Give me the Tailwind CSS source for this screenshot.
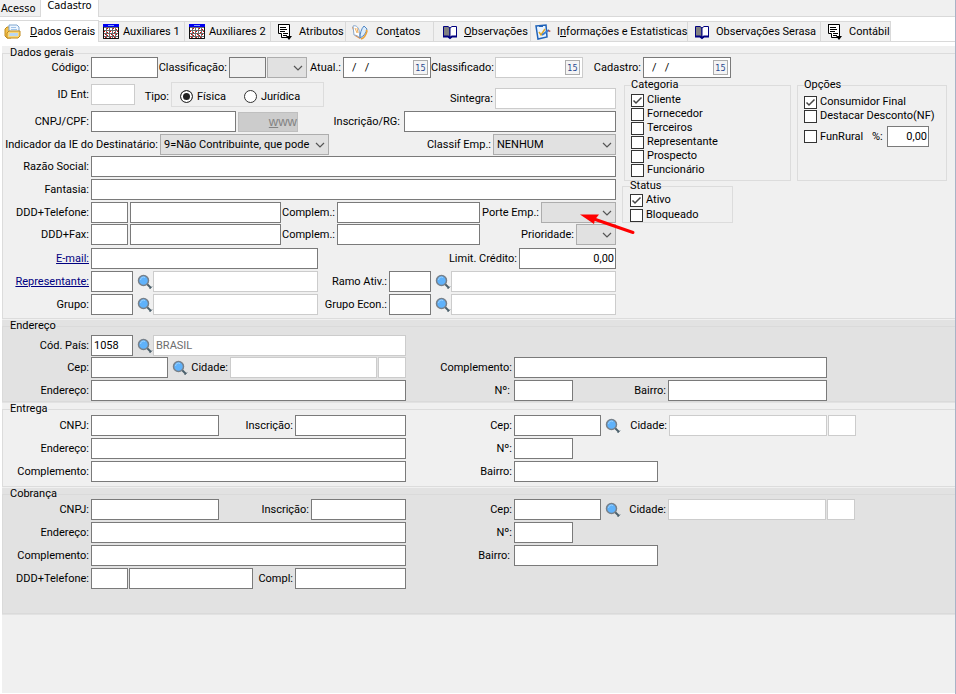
<!DOCTYPE html>
<html lang="pt-BR">

<head>
    <meta charset="UTF-8" />
    <meta name="viewport" content="width=device-width, initial-scale=1.0" />
    <title>Cadastro - Dados Gerais</title>
    <script src="https://cdn.jsdelivr.net/npm/@tailwindcss/browser@4"></script>
</head>

<body class="bg-white text-black text-[11px] leading-4 font-['Roboto','Liberation_Sans',sans-serif]">
    <!-- Shared icons -->
    <svg class="hidden" xmlns="http://www.w3.org/2000/svg">
        <symbol id="i-search" viewBox="0 0 16 16">
            <path d="M10 10L14 14" stroke="#4a5f6b" stroke-width="2" />
            <path d="M12.500 15L15 12.500" stroke="#4a5f6b" stroke-width="1" />
            <circle cx="6.500" cy="6.500" r="5" fill="#5fb2fb" stroke="#77808a" stroke-width="1.500" />
            <path d="M3.500 6A3 3 0 0 1 8 3.500" stroke="#9bd2ff" stroke-width="1" fill="none" />
        </symbol>
        <symbol id="i-grid" viewBox="0 0 16 16">
            <rect x="0" y="0" width="16" height="15" fill="#6a6a6a" />
            <rect x="0" y="0" width="16" height="3" fill="#0000f0" />
            <path d="M5 1.500h6" stroke="#7d9bff" />
            <g fill="#fff">
                <path d="M1 4h2v2H1zM4 4h2v2H4zM7 4h2v2H7zM10 4h2v2h-2zM13 4h2v2h-2z" />
                <path d="M1 7h2v2H1zM4 7h2v2H4zM7 7h2v2H7zM10 7h2v2h-2zM13 7h2v2h-2z" />
                <path d="M1 10h2v2H1zM4 10h2v2H4zM7 10h2v2H7zM10 10h2v2h-2zM13 10h2v2h-2z" />
                <path d="M1 13h2v1H1zM4 13h2v1H4zM7 13h2v1H7zM10 13h2v1h-2zM13 13h2v1h-2z" />
            </g>
            <path d="M4 4h1v1H4zM10 4h1v1h-1zM13 5h1v1h-1zM1 7h1v1H1zM4 8h1v1H4zM7 7h1v1H7zM11 8h1v1h-1zM14 7h1v1h-1zM2 10h1v1H2zM4 11h1v1H4zM8 10h1v1H8zM10 11h1v1h-1zM13 10h1v1h-1zM2 13h1v1H2zM7 13h1v1H7zM11 13h1v1h-1z" fill="#e00000" />
            <path d="M0.500 3V14.500H15.500V3" fill="none" stroke="#111" />
        </symbol>
        <symbol id="i-note" viewBox="0 0 16 16">
            <path d="M1 1h11v11l2 0-2 3-2-2H4V10H1z" fill="#fff" />
            <path d="M1 0.500h11.500V12M1.500 0.500V9.500H4.500V13.500H12M3 3.500h6M3 5.500h7M3 7.500h5M6 9.500h5M6 11.500h4" fill="none" stroke="#000" />
            <path d="M9 12h6l-3 4z" fill="#000" />
        </symbol>
        <symbol id="i-book" viewBox="0 0 16 16">
            <path d="M1.500 2.500H6L8 4V13.500L6 12.500H1.500z" fill="#808080" stroke="#000080" />
            <path d="M14.500 2.500H10L8 4V13.500L10 12.500H14.500z" fill="#fff" stroke="#000080" />
            <path d="M1 12.500h5L8 14L10 12.500h5" fill="none" stroke="#000080" stroke-width="2" />
        </symbol>
        <symbol id="i-chevron" viewBox="0 0 10 6">
            <path d="M1 1L5 5L9 1" fill="none" stroke="#555" stroke-width="1.200" />
        </symbol>
    </svg>

    <div class="min-h-screen flex flex-col border-r border-[#a9b3c6]">
        <!-- Main tabs -->
        <nav class="flex h-[17px] bg-[#f0f0f0] border-b border-[#d9d9d9] text-[11px] font-['DejaVu_Sans_Condensed','Noto_Sans',sans-serif]">
            <a href="#" class="w-10 pl-px pt-px leading-4">Acesso</a>
            <a href="#" class="w-[59px] h-[17px] bg-white border-x border-[#d9d9d9] text-center leading-3">Cadastro</a>
        </nav>

        <!-- Sub tabs -->
        <nav class="flex items-end h-[25px] border-b border-[#d9d9d9] whitespace-nowrap">
            <a href="#" class="flex items-center w-[99px] h-[22px] -mb-px bg-white border-t border-r border-[#d9d9d9] pl-1 gap-2">
                <svg class="w-[18px] h-4 shrink-0" viewBox="0 0 18 16">
                    <path d="M1 5l2-2h3l1 2v9H3l-2-2z" fill="#f3c04b" stroke="#c08a1c" />
                    <path d="M5 1h8l2 2v7H5z" fill="#eef6ff" stroke="#7fa6d0" />
                    <path d="M7 3.500h5M7 5.500h6" stroke="#9fc3e8" />
                    <path d="M3 9l2-2h11v5l-2 2H3z" fill="#f9d779" stroke="#c08a1c" />
                    <path d="M6 9h8v3H5z" fill="#b9d6f2" />
                </svg>
                <span><u>D</u>ados Gerais</span>
            </a>
            <a href="#" class="flex items-center w-[86px] h-5 bg-[#f0f0f0] border-t border-r border-[#d9d9d9] pl-1 gap-1">
                <svg class="size-4 shrink-0"><use href="#i-grid" /></svg>Auxiliares 1</a>
            <a href="#" class="flex items-center w-[86px] h-5 bg-[#f0f0f0] border-t border-r border-[#d9d9d9] pl-1 gap-1">
                <svg class="size-4 shrink-0"><use href="#i-grid" /></svg>Auxiliares 2</a>
            <a href="#" class="flex items-center w-[75px] h-5 bg-[#f0f0f0] border-t border-r border-[#d9d9d9] pl-1.5 gap-1.5">
                <svg class="size-4 shrink-0"><use href="#i-note" /></svg>Atributos</a>
            <a href="#" class="flex items-center w-[88px] h-5 bg-[#f0f0f0] border-t border-r border-[#d9d9d9] pl-1.5 gap-2">
                <svg class="size-4 shrink-0" viewBox="0 0 16 16">
                    <path d="M0 3l3 9 5 3 1-2-4-9z" fill="#e88b3a" />
                    <path d="M1 2c3-1 5 1 6 4l1 8c-2-2-4-3-6-3z" fill="#fff" stroke="#8ba9cc" />
                    <path d="M8 14c0-4 1-9 4-12l3 3c-1 4-3 7-7 9z" fill="#d9ebfb" stroke="#4d86c6" />
                    <path d="M3 4l2 5M5 4l1 5" stroke="#f0b060" />
                    <path d="M14 6l1 1c-1 4-3 7-6 8" fill="none" stroke="#e8a23a" stroke-width="1.500" />
                </svg>
                <span>Con<u>t</u>atos</span></a>
            <a href="#" class="flex items-center w-[97px] h-5 bg-[#f0f0f0] border-t border-r border-[#d9d9d9] pl-2 gap-1.5">
                <svg class="size-4 shrink-0"><use href="#i-book" /></svg><span><u>O</u>bservações</span></a>
            <a href="#" class="flex items-center w-[157px] h-5 bg-[#f0f0f0] border-t border-r border-[#d9d9d9] pl-1 gap-1.5">
                <svg class="size-4 shrink-0" viewBox="0 0 16 16">
                    <path d="M1 2l10-1 1 12-9 2z" fill="#e9f4ff" stroke="#1f62b8" stroke-width="1.500" />
                    <path d="M4 1h4v2H4z" fill="#1f62b8" />
                    <path d="M4 8l2 3 4-6" fill="none" stroke="#e5a823" stroke-width="1.500" />
                    <path d="M7 11l7-5" stroke="#3c7fd0" stroke-width="2" />
                    <path d="M13 6l3 1-2 1z" fill="#c0392b" />
                </svg>
                <span>I<u>n</u>formações e Estatisticas</span></a>
            <a href="#" class="flex items-center w-[133px] h-5 bg-[#f0f0f0] border-t border-r border-[#d9d9d9] pl-1.5 gap-1.5">
                <svg class="size-4 shrink-0"><use href="#i-book" /></svg>Observações Serasa</a>
            <a href="#" class="flex items-center w-[70px] h-5 bg-[#f0f0f0] border-t border-r border-[#d9d9d9] pl-1.5 gap-1.5">
                <svg class="size-4 shrink-0"><use href="#i-note" /></svg>Contábil</a>
        </nav>

        <form class="flex-1 mt-1 ml-0.5 mb-px bg-[#f0f0f0] whitespace-nowrap" onsubmit="event.preventDefault()">
            <!-- Dados gerais -->
            <fieldset class="min-w-0 mt-[3px] border border-r-0 border-[#dcdcdc] pb-[3px]">
                <legend class="ml-[7px] leading-2">Dados gerais</legend>
                <div class="flex items-center h-[21px]">
                    <label for="codigo" class="w-[88px] text-right pr-0.5">Código:</label>
                    <input id="codigo" type="text" class="w-[67px] h-[21px] border border-[#7a7a7a] bg-white px-1" />
                    <label for="classificacao" class="w-[71px] text-right pr-0.5">Classificação:</label>
                    <input id="classificacao" type="text" class="w-[37px] h-[21px] border border-[#7a7a7a] bg-[#f0f0f0] px-1" />
                    <div class="relative ml-px">
                        <select aria-label="Tipo de classificação" class="block appearance-none w-10 h-[21px] border border-[#adadad] bg-[#e1e1e1] px-1">
                            <option></option>
                        </select>
                        <svg class="absolute right-1 top-2 w-2.5 h-1.5 pointer-events-none"><use href="#i-chevron" /></svg>
                    </div>
                    <label for="atual" class="w-9 text-right pr-0.5">Atual.:</label>
                    <div class="flex items-center w-[88px] h-[21px] border border-[#7a7a7a] bg-white pr-0.5">
                        <input id="atual" type="text" value="/   /" class="min-w-0 flex-1 pl-2 whitespace-pre" />
                        <button type="button" class="w-[15px] h-[15px] border border-[#adadad] bg-[#f4f4f4] text-[#2a4a90] text-[9px] leading-3 font-['DejaVu_Sans_Condensed',sans-serif]">15</button>
                    </div>
                    <label for="classificado" class="w-16 text-right pr-0.5">Classificado:</label>
                    <div class="flex items-center w-[88px] h-[21px] border border-[#cccccc] bg-white pr-0.5">
                        <input id="classificado" type="text" class="min-w-0 flex-1 pl-2" />
                        <button type="button" class="w-[15px] h-[15px] border border-[#adadad] bg-[#f4f4f4] text-[#2a4a90] text-[9px] leading-3 font-['DejaVu_Sans_Condensed',sans-serif]">15</button>
                    </div>
                    <label for="cadastro" class="w-[60px] text-right pr-0.5">Cadastro:</label>
                    <div class="flex items-center w-[88px] h-[21px] border border-[#7a7a7a] bg-white pr-0.5">
                        <input id="cadastro" type="text" value="/   /" class="min-w-0 flex-1 pl-2 whitespace-pre" />
                        <button type="button" class="w-[15px] h-[15px] border border-[#adadad] bg-[#f4f4f4] text-[#2a4a90] text-[9px] leading-3 font-['DejaVu_Sans_Condensed',sans-serif]">15</button>
                    </div>
                </div>

                <div class="flex items-start">
                    <div class="flex-1 min-w-0 pt-1">
                        <div class="flex items-start h-[27px]">
                            <div class="flex items-center mt-0.5">
                                <label for="ident" class="w-[88px] text-right pr-0.5">ID Ent:</label>
                                <input id="ident" type="text" class="w-11 h-[21px] border border-[#cccccc] bg-white px-1" />
                            </div>
                            <span id="tipo" class="w-9 text-right pr-0.5 pt-[7px]">Tipo:</span>
                            <div role="radiogroup" aria-labelledby="tipo" class="flex items-center gap-[18px] w-[153px] h-[25px] border border-[#dcdcdc] pl-2 pt-1">
                                <label class="flex items-center gap-1">
                                    <input type="radio" name="tipo" checked class="appearance-none size-[13px] rounded-full border border-[#333] bg-white checked:bg-[#222] checked:shadow-[inset_0_0_0_2px_#fff]" />Física</label>
                                <label class="flex items-center gap-1">
                                    <input type="radio" name="tipo" class="appearance-none size-[13px] rounded-full border border-[#333] bg-white checked:bg-[#222] checked:shadow-[inset_0_0_0_2px_#fff]" />Jurídica</label>
                            </div>
                            <div class="flex items-center self-end ml-auto">
                                <label for="sintegra" class="pr-0.5">Sintegra:</label>
                                <input id="sintegra" type="text" class="w-[121px] h-[21px] border border-[#cccccc] bg-white px-1" />
                            </div>
                        </div>
                        <div class="flex items-center h-[21px] mt-0.5">
                            <label for="cnpj" class="w-[88px] text-right pr-0.5">CNPJ/CPF:</label>
                            <input id="cnpj" type="text" class="w-[145px] h-[21px] border border-[#7a7a7a] bg-white px-1" />
                            <button type="button" class="w-[60px] h-5 ml-0.5 border border-[#bfbfbf] bg-[#cccccc] text-[#838383] text-right text-[13px] font-['Liberation_Sans',sans-serif]"><u>w</u>ww</button>
                            <label for="inscricao" class="w-[106px] text-right pr-1">Inscrição/RG:</label>
                            <input id="inscricao" type="text" class="flex-1 min-w-0 h-[21px] border border-[#7a7a7a] bg-white px-1" />
                        </div>
                        <div class="flex items-center h-[21px] mt-0.5">
                            <label for="indicador" class="w-[157px] text-right pr-0.5">Indicador da IE do Destinatário:</label>
                            <div class="relative">
                                <select id="indicador" class="block appearance-none w-[169px] h-[21px] border border-[#adadad] bg-[#e1e1e1] pl-[3px] pr-4">
                                    <option>9=Não Contribuinte, que pode</option>
                                </select>
                                <svg class="absolute right-1 top-2 w-2.5 h-1.5 pointer-events-none"><use href="#i-chevron" /></svg>
                            </div>
                            <label for="classif" class="ml-auto pr-0.5">Classif Emp.:</label>
                            <div class="relative">
                                <select id="classif" class="block appearance-none w-[123px] h-[21px] border border-[#adadad] bg-[#e1e1e1] pl-[3px] pr-4">
                                    <option>NENHUM</option>
                                </select>
                                <svg class="absolute right-1 top-2 w-2.5 h-1.5 pointer-events-none"><use href="#i-chevron" /></svg>
                            </div>
                        </div>
                        <div class="flex items-center h-[21px] mt-px">
                            <label for="razao" class="w-[88px] text-right pr-0.5">Razão Social:</label>
                            <input id="razao" type="text" class="flex-1 h-[21px] border border-[#7a7a7a] bg-white px-1" />
                        </div>
                        <div class="flex items-center h-[21px] mt-0.5">
                            <label for="fantasia" class="w-[88px] text-right pr-0.5">Fantasia:</label>
                            <input id="fantasia" type="text" class="flex-1 h-[21px] border border-[#7a7a7a] bg-white px-1" />
                        </div>
                        <div class="flex items-center h-[21px] mt-0.5">
                            <label for="ddd" class="w-[88px] text-right pr-0.5">DDD+Telefone:</label>
                            <input id="ddd" type="text" class="w-[37px] h-[21px] border border-[#7a7a7a] bg-white px-1" />
                            <input aria-label="Telefone" type="text" class="w-[151px] h-[21px] ml-0.5 border border-[#7a7a7a] bg-white px-1" />
                            <label for="complem1" class="w-14 text-right pr-0.5">Complem.:</label>
                            <input id="complem1" type="text" class="w-[143px] h-[21px] border border-[#7a7a7a] bg-white px-1" />
                            <label for="porte" class="ml-auto pr-0.5">Porte Emp.:</label>
                            <div class="relative">
                                <select id="porte" class="block appearance-none w-[75px] h-[21px] border border-[#adadad] bg-[#e1e1e1] px-1">
                                    <option></option>
                                </select>
                                <svg class="absolute right-1 top-2 w-2.5 h-1.5 pointer-events-none"><use href="#i-chevron" /></svg>
                                <!-- Pointer to the company size field -->
                                <svg class="absolute left-[39px] top-2.5 w-14 h-6 z-10 pointer-events-none" viewBox="0 0 56 24">
                                    <path d="M14 7L53 20.500" stroke="#ff0000" stroke-width="3" stroke-linecap="round" />
                                    <path d="M0 2.500L19 2.500L15 7.500L14 12z" fill="#ff0000" />
                                </svg>
                            </div>
                        </div>
                        <div class="flex items-center h-[21px] mt-px">
                            <label for="dddfax" class="w-[88px] text-right pr-0.5">DDD+Fax:</label>
                            <input id="dddfax" type="text" class="w-[37px] h-[21px] border border-[#7a7a7a] bg-white px-1" />
                            <input aria-label="Fax" type="text" class="w-[151px] h-[21px] ml-0.5 border border-[#7a7a7a] bg-white px-1" />
                            <label for="complem2" class="w-14 text-right pr-0.5">Complem.:</label>
                            <input id="complem2" type="text" class="w-[143px] h-[21px] border border-[#7a7a7a] bg-white px-1" />
                            <label for="prioridade" class="ml-auto pr-0.5">Prioridade:</label>
                            <div class="relative">
                                <select id="prioridade" class="block appearance-none w-10 h-[21px] border border-[#adadad] bg-[#e1e1e1] px-1">
                                    <option></option>
                                </select>
                                <svg class="absolute right-1 top-2 w-2.5 h-1.5 pointer-events-none"><use href="#i-chevron" /></svg>
                            </div>
                        </div>
                        <div class="flex items-center h-[21px] mt-[3px]">
                            <a href="#" class="w-[88px] text-right pr-0.5 text-[#000080] underline">E-mail:</a>
                            <input aria-label="E-mail" type="text" class="w-[227px] h-[21px] border border-[#7a7a7a] bg-white px-1" />
                            <label for="limite" class="ml-auto pr-0.5">Limit. Crédito:</label>
                            <input id="limite" type="text" value="0,00" class="w-[97px] h-[21px] border border-[#7a7a7a] bg-white px-px text-right" />
                        </div>
                        <div class="flex items-center h-[21px] mt-0.5">
                            <a href="#" class="w-[88px] text-right pr-0.5 text-[#000080] underline">Representante:</a>
                            <input aria-label="Representante" type="text" class="w-[42px] h-[21px] border border-[#7a7a7a] bg-white px-1" />
                            <button type="button" aria-label="Buscar representante" class="w-5 pl-1"><svg class="size-4"><use href="#i-search" /></svg></button>
                            <input aria-label="Nome do representante" type="text" class="w-[165px] h-[21px] border border-[#cccccc] bg-white px-1" />
                            <label for="ramo" class="ml-auto pr-0.5">Ramo Ativ.:</label>
                            <input id="ramo" type="text" class="w-[42px] h-[21px] border border-[#7a7a7a] bg-white px-1" />
                            <button type="button" aria-label="Buscar ramo" class="w-5 pl-1"><svg class="size-4"><use href="#i-search" /></svg></button>
                            <input aria-label="Nome do ramo" type="text" class="w-[165px] h-[21px] border border-[#cccccc] bg-white px-1" />
                        </div>
                        <div class="flex items-center h-[21px] mt-0.5">
                            <label for="grupo" class="w-[88px] text-right pr-0.5">Grupo:</label>
                            <input id="grupo" type="text" class="w-[42px] h-[21px] border border-[#7a7a7a] bg-white px-1" />
                            <button type="button" aria-label="Buscar grupo" class="w-5 pl-1"><svg class="size-4"><use href="#i-search" /></svg></button>
                            <input aria-label="Nome do grupo" type="text" class="w-[165px] h-[21px] border border-[#cccccc] bg-white px-1" />
                            <label for="grupoecon" class="ml-auto pr-0.5">Grupo Econ.:</label>
                            <input id="grupoecon" type="text" class="w-[42px] h-[21px] border border-[#7a7a7a] bg-white px-1" />
                            <button type="button" aria-label="Buscar grupo econômico" class="w-5 pl-1"><svg class="size-4"><use href="#i-search" /></svg></button>
                            <input aria-label="Nome do grupo econômico" type="text" class="w-[165px] h-[21px] border border-[#cccccc] bg-white px-1" />
                        </div>
                    </div>

                    <!-- Categoria / Opções / Status -->
                    <div class="w-[339px] shrink-0 pt-[3px]">
                        <div class="flex gap-1.5 pl-2">
                            <fieldset class="w-[167px] border border-[#dcdcdc] pt-1 pb-[3px] pl-1.5">
                                <legend class="leading-2">Categoria</legend>
                                <label class="flex items-center gap-[3px] h-3.5"><span class="relative size-[13px]"><input type="checkbox" checked class="peer block appearance-none size-[13px] border border-[#333] bg-white" /><svg class="absolute inset-0 hidden peer-checked:block pointer-events-none" viewBox="0 0 13 13"><path d="M2.500 6.500L5 9L10.500 3.500" fill="none" stroke="#444" stroke-width="1.500" /></svg></span>Cliente</label>
                                <label class="flex items-center gap-[3px] h-3.5"><input type="checkbox" class="appearance-none size-[13px] border border-[#333] bg-white" />Fornecedor</label>
                                <label class="flex items-center gap-[3px] h-3.5"><input type="checkbox" class="appearance-none size-[13px] border border-[#333] bg-white" />Terceiros</label>
                                <label class="flex items-center gap-[3px] h-3.5"><input type="checkbox" class="appearance-none size-[13px] border border-[#333] bg-white" />Representante</label>
                                <label class="flex items-center gap-[3px] h-3.5"><input type="checkbox" class="appearance-none size-[13px] border border-[#333] bg-white" />Prospecto</label>
                                <label class="flex items-center gap-[3px] h-3.5"><input type="checkbox" class="appearance-none size-[13px] border border-[#333] bg-white" />Funcionário</label>
                            </fieldset>
                            <fieldset class="w-[150px] border border-[#dcdcdc] pt-1.5 pl-1.5">
                                <legend class="leading-2">Opções</legend>
                                <label class="flex items-center gap-[3px] h-3.5"><span class="relative size-[13px]"><input type="checkbox" checked class="peer block appearance-none size-[13px] border border-[#333] bg-white" /><svg class="absolute inset-0 hidden peer-checked:block pointer-events-none" viewBox="0 0 13 13"><path d="M2.500 6.500L5 9L10.500 3.500" fill="none" stroke="#444" stroke-width="1.500" /></svg></span>Consumidor Final</label>
                                <label class="flex items-center gap-[3px] h-3.5"><input type="checkbox" class="appearance-none size-[13px] border border-[#333] bg-white" />Destacar Desconto(NF)</label>
                                <div class="flex items-center h-[21px] mt-[3px]">
                                    <label class="flex items-center gap-[3px] w-[68px]"><input type="checkbox" class="appearance-none size-[13px] border border-[#333] bg-white" />FunRural</label>
                                    <label for="funrural" class="w-[15px]">%:</label>
                                    <input id="funrural" type="text" value="0,00" class="w-[42px] h-[21px] border border-[#7a7a7a] bg-white px-px text-right" />
                                </div>
                            </fieldset>
                        </div>
                        <fieldset class="w-[111px] ml-1.5 mt-px border border-[#dcdcdc] pt-[3px] pl-[7px]">
                            <legend class="leading-2">Status</legend>
                            <div class="flex flex-col gap-px">
                                <label class="flex items-center gap-[3px] h-3.5"><span class="relative size-[13px]"><input type="checkbox" checked class="peer block appearance-none size-[13px] border border-[#333] bg-white" /><svg class="absolute inset-0 hidden peer-checked:block pointer-events-none" viewBox="0 0 13 13"><path d="M2.500 6.500L5 9L10.500 3.500" fill="none" stroke="#444" stroke-width="1.500" /></svg></span>Ativo</label>
                                <label class="flex items-center gap-[3px] h-3.5"><input type="checkbox" class="appearance-none size-[13px] border border-[#333] bg-white" />Bloqueado</label>
                            </div>
                        </fieldset>
                    </div>
                </div>
            </fieldset>

            <!-- Endereço -->
            <section class="mt-px bg-[#e2e2e2] pt-0.5 pb-px">
                <fieldset class="min-w-0 border border-r-0 border-[#dadada] pt-[5px]">
                    <legend class="ml-[7px] leading-2">Endereço</legend>
                    <div class="flex items-end">
                        <div class="w-[403px]">
                            <div class="flex items-center h-[21px]">
                                <label for="pais" class="w-[88px] text-right pr-0.5">Cód. País:</label>
                                <input id="pais" type="text" value="1058" class="w-[42px] h-[21px] border border-[#7a7a7a] bg-white px-0.5" />
                                <button type="button" aria-label="Buscar país" class="w-5 pl-1"><svg class="size-4"><use href="#i-search" /></svg></button>
                                <input aria-label="País" type="text" value="BRASIL" class="flex-1 min-w-0 h-[21px] border border-[#cccccc] bg-white px-0.5 text-[#6d6d6d]" />
                            </div>
                            <div class="flex items-center h-[21px] mt-px">
                                <label for="cep" class="w-[88px] text-right pr-0.5">Cep:</label>
                                <input id="cep" type="text" class="w-[77px] h-[21px] border border-[#7a7a7a] bg-white px-1" />
                                <button type="button" aria-label="Buscar CEP" class="w-5 pl-1"><svg class="size-4"><use href="#i-search" /></svg></button>
                                <label for="cidade" class="w-[42px] text-right pr-0.5">Cidade:</label>
                                <input id="cidade" type="text" class="flex-1 min-w-0 h-[21px] border border-[#cccccc] bg-white px-1" />
                                <input aria-label="UF" type="text" class="w-7 h-[21px] ml-px border border-[#cccccc] bg-white px-1" />
                            </div>
                            <div class="flex items-center h-[21px] mt-0.5">
                                <label for="endereco" class="w-[88px] text-right pr-0.5">Endereço:</label>
                                <input id="endereco" type="text" class="flex-1 h-[21px] border border-[#7a7a7a] bg-white px-1" />
                            </div>
                        </div>
                        <div class="w-[421px]">
                            <div class="flex items-center h-[21px]">
                                <label for="complemento" class="w-[108px] text-right pr-0.5">Complemento:</label>
                                <input id="complemento" type="text" class="flex-1 h-[21px] border border-[#7a7a7a] bg-white px-1" />
                            </div>
                            <div class="flex items-center h-[21px] mt-0.5">
                                <label for="numero" class="w-[108px] text-right pr-1">Nº:</label>
                                <input id="numero" type="text" class="w-[59px] h-[21px] border border-[#7a7a7a] bg-white px-1" />
                                <label for="bairro" class="ml-auto pr-0.5">Bairro:</label>
                                <input id="bairro" type="text" class="w-[159px] h-[21px] border border-[#7a7a7a] bg-white px-1" />
                            </div>
                        </div>
                    </div>
                </fieldset>
            </section>

            <!-- Entrega -->
            <section class="pt-0.5 pb-px">
                <fieldset class="min-w-0 border border-r-0 border-[#dcdcdc] pt-0.5 pb-1">
                    <legend class="ml-[7px] leading-2">Entrega</legend>
                    <div class="flex">
                        <div class="w-[403px]">
                            <div class="flex items-center h-[21px]">
                                <label for="ent-cnpj" class="w-[88px] text-right pr-0.5">CNPJ:</label>
                                <input id="ent-cnpj" type="text" class="w-32 h-[21px] border border-[#7a7a7a] bg-white px-1" />
                                <label for="ent-insc" class="ml-auto pr-0.5">Inscrição:</label>
                                <input id="ent-insc" type="text" class="w-[111px] h-[21px] border border-[#7a7a7a] bg-white px-1" />
                            </div>
                            <div class="flex items-center h-[21px] mt-0.5">
                                <label for="ent-end" class="w-[88px] text-right pr-0.5">Endereço:</label>
                                <input id="ent-end" type="text" class="flex-1 h-[21px] border border-[#7a7a7a] bg-white px-1" />
                            </div>
                            <div class="flex items-center h-[21px] mt-0.5">
                                <label for="ent-compl" class="w-[88px] text-right pr-0.5">Complemento:</label>
                                <input id="ent-compl" type="text" class="flex-1 h-[21px] border border-[#7a7a7a] bg-white px-1" />
                            </div>
                        </div>
                        <div class="w-[450px]">
                            <div class="flex items-center h-[21px]">
                                <label for="ent-cep" class="w-[108px] text-right pr-0.5">Cep:</label>
                                <input id="ent-cep" type="text" class="w-[87px] h-[21px] border border-[#7a7a7a] bg-white px-1" />
                                <button type="button" aria-label="Buscar CEP de entrega" class="w-5 pl-1"><svg class="size-4"><use href="#i-search" /></svg></button>
                                <label for="ent-cidade" class="w-12 text-right pr-0.5">Cidade:</label>
                                <input id="ent-cidade" type="text" class="flex-1 min-w-0 h-[21px] border border-[#cccccc] bg-white px-1" />
                                <input aria-label="UF de entrega" type="text" class="w-7 h-[21px] ml-px border border-[#cccccc] bg-white px-1" />
                            </div>
                            <div class="flex items-center h-[21px] mt-0.5">
                                <label for="ent-num" class="w-[108px] text-right pr-0.5">Nº:</label>
                                <input id="ent-num" type="text" class="w-[59px] h-[21px] border border-[#7a7a7a] bg-white px-1" />
                            </div>
                            <div class="flex items-center h-[21px] mt-0.5">
                                <label for="ent-bairro" class="w-[108px] text-right pr-0.5">Bairro:</label>
                                <input id="ent-bairro" type="text" class="w-36 h-[21px] border border-[#7a7a7a] bg-white px-1" />
                            </div>
                        </div>
                    </div>
                </fieldset>
            </section>

            <!-- Cobrança -->
            <section class="bg-[#e2e2e2] pt-0.5 pb-px">
                <fieldset class="min-w-0 border border-r-0 border-[#dadada] pt-px pb-6">
                    <legend class="ml-[7px] leading-2">Cobrança</legend>
                    <div class="flex">
                        <div class="w-[403px]">
                            <div class="flex items-center h-[21px]">
                                <label for="cob-cnpj" class="w-[88px] text-right pr-0.5">CNPJ:</label>
                                <input id="cob-cnpj" type="text" class="w-32 h-[21px] border border-[#7a7a7a] bg-white px-1" />
                                <label for="cob-insc" class="ml-auto pr-0.5">Inscrição:</label>
                                <input id="cob-insc" type="text" class="w-[95px] h-[21px] border border-[#7a7a7a] bg-white px-1" />
                            </div>
                            <div class="flex items-center h-[21px] mt-0.5">
                                <label for="cob-end" class="w-[88px] text-right pr-0.5">Endereço:</label>
                                <input id="cob-end" type="text" class="flex-1 h-[21px] border border-[#7a7a7a] bg-white px-1" />
                            </div>
                            <div class="flex items-center h-[21px] mt-0.5">
                                <label for="cob-compl" class="w-[88px] text-right pr-0.5">Complemento:</label>
                                <input id="cob-compl" type="text" class="flex-1 h-[21px] border border-[#7a7a7a] bg-white px-1" />
                            </div>
                            <div class="flex items-center h-[21px] mt-0.5">
                                <label for="cob-ddd" class="w-[88px] text-right pr-0.5">DDD+Telefone:</label>
                                <input id="cob-ddd" type="text" class="w-[37px] h-[21px] border border-[#7a7a7a] bg-white px-1" />
                                <input aria-label="Telefone de cobrança" type="text" class="w-[124px] h-[21px] ml-px border border-[#7a7a7a] bg-white px-1" />
                                <label for="cob-compl2" class="ml-auto pr-0.5">Compl:</label>
                                <input id="cob-compl2" type="text" class="w-[111px] h-[21px] border border-[#7a7a7a] bg-white px-1" />
                            </div>
                        </div>
                        <div class="w-[449px]">
                            <div class="flex items-center h-[21px]">
                                <label for="cob-cep" class="w-[108px] text-right pr-0.5">Cep:</label>
                                <input id="cob-cep" type="text" class="w-[87px] h-[21px] border border-[#7a7a7a] bg-white px-1" />
                                <button type="button" aria-label="Buscar CEP de cobrança" class="w-5 pl-1"><svg class="size-4"><use href="#i-search" /></svg></button>
                                <label for="cob-cidade" class="w-[47px] text-right pr-0.5">Cidade:</label>
                                <input id="cob-cidade" type="text" class="flex-1 min-w-0 h-[21px] border border-[#cccccc] bg-white px-1" />
                                <input aria-label="UF de cobrança" type="text" class="w-7 h-[21px] ml-px border border-[#cccccc] bg-white px-1" />
                            </div>
                            <div class="flex items-center h-[21px] mt-0.5">
                                <label for="cob-num" class="w-[108px] text-right pr-0.5">Nº:</label>
                                <input id="cob-num" type="text" class="w-[59px] h-[21px] border border-[#7a7a7a] bg-white px-1" />
                            </div>
                            <div class="flex items-center h-[21px] mt-0.5">
                                <label for="cob-bairro" class="w-[108px] text-right pr-1">Bairro:</label>
                                <input id="cob-bairro" type="text" class="w-36 h-[21px] border border-[#7a7a7a] bg-white px-1" />
                            </div>
                        </div>
                    </div>
                </fieldset>
            </section>
        </form>
    </div>
</body>

</html>
